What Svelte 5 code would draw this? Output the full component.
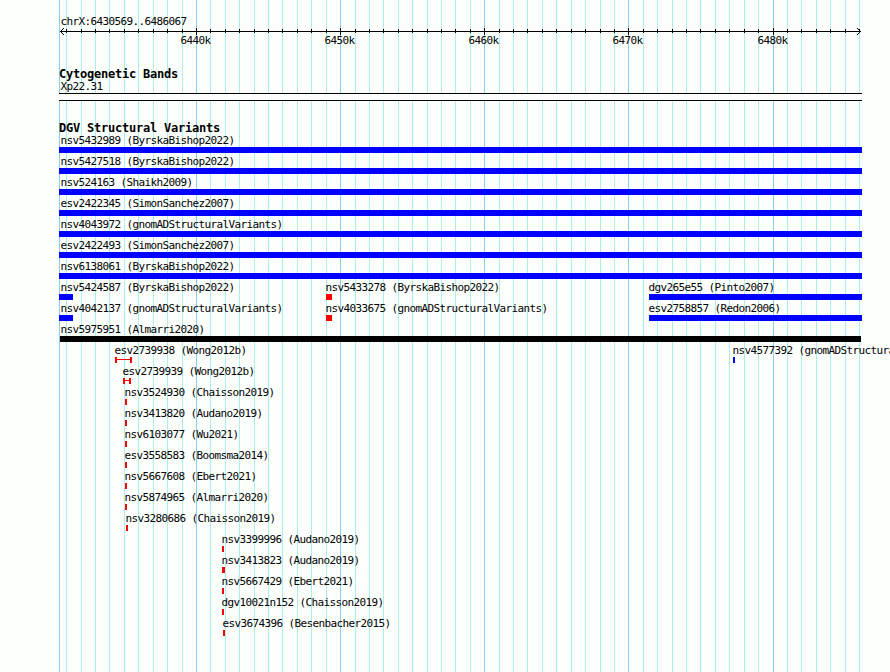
<!-- Genome browser view: ruler, cytogenetic band and structural variant tracks. -->
<script lang="ts">
  type Shape = 'gain' | 'loss' | 'complex' | 'span';

  interface Feature {
    name: string;
    labelX: number;
    x: number;
    width: number;
    kind: Shape;
  }

  const REGION_START = 6430569;
  const REGION_END = 6486067;
  const LEFT = 60;
  const SCALE = 800 / (REGION_END - REGION_START);

  const toX = (kb: number) => Math.round(LEFT + (kb * 1000 - REGION_START) * SCALE);

  const ticks = Array.from({ length: 56 }, (_, i) => {
    const kb = 6431 + i;
    return { kb, x: toX(kb), major: kb % 10 === 0 };
  });
  const majorTicks = ticks.filter((t) => t.major);

  function feature(name: string, labelX: number, x: number, width: number, kind: Shape): Feature {
    return { name, labelX, x, width, kind };
  }

  const full = (name: string) => [feature(name, 60, 59, 803, 'gain')];

  const rows: Feature[][] = [
    full('nsv5432989 (ByrskaBishop2022)'),
    full('nsv5427518 (ByrskaBishop2022)'),
    full('nsv524163 (Shaikh2009)'),
    full('esv2422345 (SimonSanchez2007)'),
    full('nsv4043972 (gnomADStructuralVariants)'),
    full('esv2422493 (SimonSanchez2007)'),
    full('nsv6138061 (ByrskaBishop2022)'),
    [
      feature('nsv5424587 (ByrskaBishop2022)', 60, 59, 14, 'gain'),
      feature('nsv5433278 (ByrskaBishop2022)', 325, 326, 6, 'loss'),
      feature('dgv265e55 (Pinto2007)', 648, 649, 213, 'gain'),
    ],
    [
      feature('nsv4042137 (gnomADStructuralVariants)', 60, 59, 14, 'gain'),
      feature('nsv4033675 (gnomADStructuralVariants)', 325, 326, 6, 'loss'),
      feature('esv2758857 (Redon2006)', 648, 649, 213, 'gain'),
    ],
    [feature('nsv5975951 (Almarri2020)', 60, 60, 801, 'complex')],
    [
      feature('esv2739938 (Wong2012b)', 114, 115, 17, 'span'),
      feature('nsv4577392 (gnomADStructuralVariants)', 732, 733, 2, 'gain'),
    ],
    [feature('esv2739939 (Wong2012b)', 122, 123, 8, 'span')],
    [feature('nsv3524930 (Chaisson2019)', 124, 125, 2, 'loss')],
    [feature('nsv3413820 (Audano2019)', 124, 125, 2, 'loss')],
    [feature('nsv6103077 (Wu2021)', 124, 125, 2, 'loss')],
    [feature('esv3558583 (Boomsma2014)', 124, 125, 2, 'loss')],
    [feature('nsv5667608 (Ebert2021)', 124, 125, 2, 'loss')],
    [feature('nsv5874965 (Almarri2020)', 124, 125, 2, 'loss')],
    [feature('nsv3280686 (Chaisson2019)', 125, 126, 2, 'loss')],
    [feature('nsv3399996 (Audano2019)', 221, 222, 2, 'loss')],
    [feature('nsv3413823 (Audano2019)', 221, 222, 3, 'loss')],
    [feature('nsv5667429 (Ebert2021)', 221, 222, 2, 'loss')],
    [feature('dgv10021n152 (Chaisson2019)', 221, 222, 2, 'loss')],
    [feature('esv3674396 (Besenbacher2015)', 222, 223, 2, 'loss')],
  ];
</script>

<div class="browser">
  <svg class="gridlines" width="890" height="672" shape-rendering="crispEdges" aria-hidden="true">
    <rect class="line-major" x="59" y="0" width="1" height="672" />
    {#each ticks as tick (tick.kb)}
      <rect class={tick.major ? 'line-major' : 'line-minor'} x={tick.x} y="0" width="1" height="672" />
    {/each}
  </svg>

  <main class="tracks">
    <header class="ruler">
      <div class="label region">chrX:{REGION_START}..{REGION_END}</div>
      <svg class="axis" width="890" height="7" shape-rendering="crispEdges" aria-hidden="true">
        <rect x="60" y="3" width="801" height="1" />
        {#each [0, 1, 2, 3] as step}
          <rect x={60 + step} y={3 - step} width="1" height="1" />
          <rect x={60 + step} y={3 + step} width="1" height="1" />
          <rect x={860 - step} y={3 - step} width="1" height="1" />
          <rect x={860 - step} y={3 + step} width="1" height="1" />
        {/each}
        {#each ticks as tick (tick.kb)}
          <rect x={tick.x} y={tick.major ? 0 : 1} width="1" height={tick.major ? 7 : 4} />
        {/each}
      </svg>
      <div class="stack">
        {#each majorTicks as tick (tick.kb)}
          <span class="label" style="margin-left: {tick.x - 16}px">{tick.kb}k</span>
        {/each}
      </div>
    </header>

    <section class="bands">
      <h2>Cytogenetic Bands</h2>
      <div class="label band-name">Xp22.31</div>
      <div class="band"></div>
    </section>

    <section class="variants">
      <h2>DGV Structural Variants</h2>
      {#each rows as row}
        <div class="stack row">
          {#each row as item (item.name)}
            <div class="feature">
              <span class="label" style="margin-left: {item.labelX}px">{item.name}</span>
              <div class="bar {item.kind}" style="margin-left: {item.x}px; width: {item.width}px"></div>
            </div>
          {/each}
        </div>
      {/each}
    </section>
  </main>
</div>

<style>
  :global(body) {
    background: #fdfffc;
  }

  .browser {
    display: grid;
    width: 890px;
    height: 672px;
    overflow: hidden;
    background: #fdfffc;
    color: #000;
    font-family: 'DejaVu Sans Mono', monospace;
  }

  .gridlines,
  .tracks {
    grid-area: 1 / 1;
    min-width: 0;
  }

  .line-minor {
    fill: #afeeee;
  }

  .line-major {
    fill: #87ceeb;
  }

  .label {
    display: block;
    height: 13px;
    padding-left: 0.4px;
    font-size: 11px;
    line-height: 13px;
    letter-spacing: -0.623px;
    white-space: pre;
  }

  .stack {
    display: grid;
    grid-template-columns: 890px;
  }

  .stack > * {
    grid-area: 1 / 1;
  }

  .ruler {
    padding-top: 15px;
    height: 53px;
  }

  .region,
  .band-name {
    margin-left: 60px;
  }

  .axis {
    display: block;
    height: 7px;
    fill: #000;
  }

  .ruler .stack {
    margin-top: -1px;
  }

  h2 {
    height: 12px;
    margin: 0 0 0 59px;
    font-size: 12px;
    font-weight: 700;
    line-height: 12px;
    letter-spacing: -0.224px;
    white-space: pre;
  }

  .bands {
    height: 54px;
  }

  .band {
    box-sizing: border-box;
    width: 803px;
    height: 8px;
    margin-left: 59px;
    border: solid #000;
    border-width: 1px 0;
    background: #fdfffc;
  }

  .row {
    height: 21px;
  }

  .bar {
    height: 6px;
  }

  .gain {
    background: #00f;
  }

  .loss {
    background: #f00;
  }

  .complex {
    background: #000;
  }

  .span {
    box-sizing: border-box;
    border: solid #f00;
    border-width: 0 2px;
    background: linear-gradient(#f00, #f00) 0 2px / 100% 1px no-repeat;
  }
</style>
